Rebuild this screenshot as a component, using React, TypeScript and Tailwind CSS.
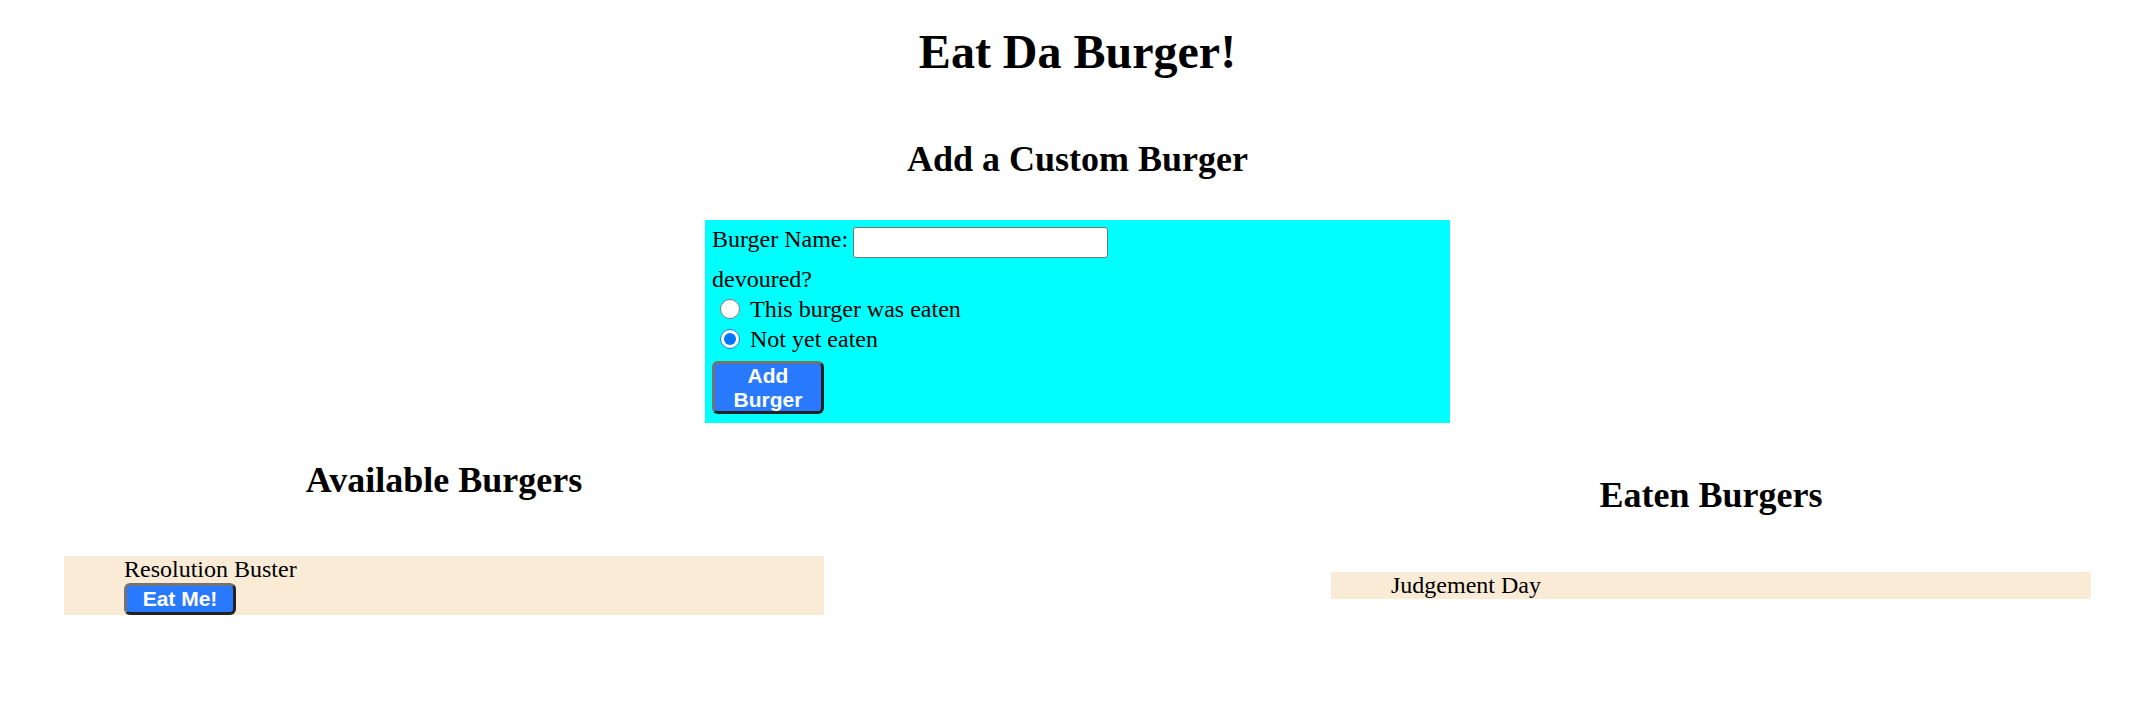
import React, { useState } from "react";

type Burger = { id: number; name: string; devoured: boolean };

const initialBurgers: Burger[] = [
  { id: 1, name: "Resolution Buster", devoured: false },
  { id: 2, name: "Judgement Day", devoured: true },
];

const App: React.FC = () => {
  const [burgers, setBurgers] = useState<Burger[]>(initialBurgers);
  const [name, setName] = useState("");
  const [devoured, setDevoured] = useState(false);

  const addBurger = (e: React.FormEvent) => {
    e.preventDefault();
    if (!name.trim()) return;
    setBurgers((prev) => [
      ...prev,
      { id: prev.length + 1, name: name.trim(), devoured },
    ]);
    setName("");
  };

  const eatBurger = (id: number) => {
    setBurgers((prev) =>
      prev.map((b) => (b.id === id ? { ...b, devoured: true } : b)),
    );
  };

  const available = burgers.filter((b) => !b.devoured);
  const eaten = burgers.filter((b) => b.devoured);

  return (
    <div className="min-h-[703px] bg-white text-black font-['Liberation_Serif',serif] text-[24px] leading-[27px]">
      {/* Header + form */}
      <div className="pl-[16px] pt-[24px] text-center">
        <h1 className="text-[48px] leading-[55px] font-bold">
          Eat Da Burger!
        </h1>
        <h2 className="mt-[60px] text-[36px] leading-[41px] font-bold">
          Add a Custom Burger
        </h2>
      </div>

      <div className="pl-[16px] mt-[40px]">
        <form
          onSubmit={addBurger}
          className="w-[745px] mx-auto bg-[#00ffff] pt-[6px] pb-[9px] pl-[7px] text-left"
        >
          <div className="flex items-start h-[32px]">
            <label htmlFor="burger-name">Burger Name:</label>
            <input
              id="burger-name"
              type="text"
              value={name}
              onChange={(e) => setName(e.target.value)}
              className="ml-[5px] mt-[1px] w-[255px] h-[31px] bg-white border border-[#767676] rounded-[3px] px-[3px] outline-none"
            />
          </div>
          <div className="mt-[8px]">devoured?</div>
          <label className="flex items-start h-[30px] pt-[3px]">
            <input
              type="radio"
              name="devoured"
              checked={devoured}
              onChange={() => setDevoured(true)}
              className="mt-[3px] ml-[8px] mr-[10px] w-[20px] h-[20px] accent-[#0075ff]"
            />
            <span>This burger was eaten</span>
          </label>
          <label className="flex items-start h-[30px] pt-[3px]">
            <input
              type="radio"
              name="devoured"
              checked={!devoured}
              onChange={() => setDevoured(false)}
              className="mt-[3px] ml-[8px] mr-[10px] w-[20px] h-[20px] accent-[#0075ff]"
            />
            <span>Not yet eaten</span>
          </label>
          <button
            type="submit"
            className="mt-[8px] block w-[112px] h-[53px] px-[9px] bg-[#2979ff] text-white font-['Liberation_Sans',Arial,sans-serif] font-bold text-[21px] leading-[24px] border-[3px] border-[#737373] border-r-[#222222] border-b-[#222222] rounded-[6px]"
          >
            Add Burger
          </button>
        </form>
      </div>

      {/* Burger lists */}
      <div className="flex justify-between pl-[64px] pr-[48px] mt-[37px]">
        <div className="w-[760px]">
          <h2 className="text-center text-[36px] leading-[41px] font-bold">
            Available Burgers
          </h2>
          <ul className="mt-[55px] bg-[#faebd7] pl-[60px]">
            {available.map((b) => (
              <li key={b.id}>
                <div>{b.name}</div>
                <button
                  onClick={() => eatBurger(b.id)}
                  className="block w-[112px] h-[32px] bg-[#2979ff] text-white font-['Liberation_Sans',Arial,sans-serif] font-bold text-[21px] leading-[24px] border-[3px] border-[#737373] border-r-[#222222] border-b-[#222222] rounded-[6px]"
                >
                  Eat Me!
                </button>
              </li>
            ))}
          </ul>
        </div>

        <div className="w-[760px] mt-[15px]">
          <h2 className="text-center text-[36px] leading-[41px] font-bold">
            Eaten Burgers
          </h2>
          <ul className="mt-[56px] bg-[#faebd7] pl-[60px]">
            {eaten.map((b) => (
              <li key={b.id}>{b.name}</li>
            ))}
          </ul>
        </div>
      </div>
    </div>
  );
};

export default App;
